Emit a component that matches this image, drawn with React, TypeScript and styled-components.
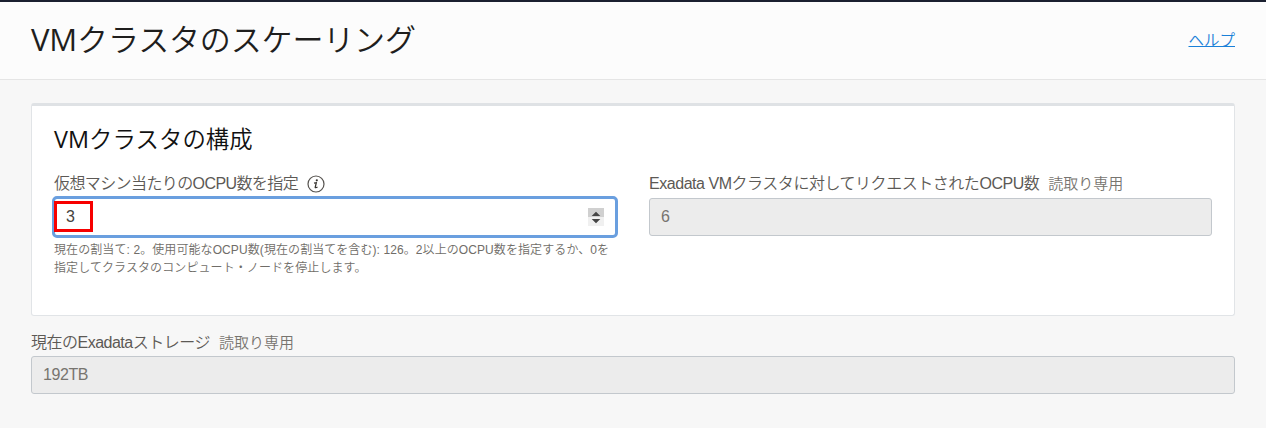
import React from "react";
import styled, { createGlobalStyle } from "styled-components";

const GlobalStyle = createGlobalStyle`
  * { box-sizing: border-box; }
  body {
    margin: 0;
    background: #f7f7f7;
    font-family: "Liberation Sans", "Noto Sans CJK JP", sans-serif;
    font-size: 16px;
    font-weight: 350;
    color: #5c5955;
  }
`;

const Page = styled.div`
  height: 428px;
  overflow: hidden;
  border-top: 2px solid #1b2030;
`;

const Header = styled.header`
  display: flex;
  justify-content: space-between;
  height: 78px;
  padding: 0 31px;
  background: #fcfcfc;
  border-bottom: 1px solid #e5e5e5;
`;

const Title = styled.h1`
  margin: 14px 0 0;
  font-family: "Open Sans", "Noto Sans CJK JP", sans-serif;
  font-size: 31px;
  font-weight: 350;
  line-height: 46px;
  letter-spacing: -0.15px;
  color: #1f1e1d;
  white-space: nowrap;
`;

const Latin = styled.span`
  font-weight: 400;
`;

const HelpLink = styled.a`
  margin-top: 28px;
  height: 22px;
  line-height: 22px;
  font-size: 15.5px;
  color: #1a80d8;
  text-decoration: underline;
  text-underline-offset: 0;
`;

const Content = styled.main`
  padding: 23px 31px 0;
`;

const Panel = styled.section`
  height: 213px;
  padding: 17px 22px 0;
  background: #fff;
  border: 1px solid #e1e4e7;
  border-top: 3px solid #dfe2e5;
  border-radius: 3px;
`;

const PanelTitle = styled.h2`
  margin: 0;
  font-family: "Open Sans", "Noto Sans CJK JP", sans-serif;
  font-size: 23.4px;
  font-weight: 350;
  line-height: 32px;
  letter-spacing: 0.05px;
  color: #111;
  white-space: nowrap;
`;

const Columns = styled.div`
  display: grid;
  grid-template-columns: 563px 563px;
  justify-content: space-between;
  margin-top: 18px;
`;

const Field = styled.div<{ $top?: number }>`
  margin-top: ${(p) => p.$top ?? 0}px;
`;

const Label = styled.div<{ $spacing?: number }>`
  display: flex;
  align-items: center;
  height: 22px;
  line-height: 22px;
  letter-spacing: ${(p) => p.$spacing ?? -0.5}px;
  white-space: nowrap;
`;

const ReadOnlyNote = styled.span`
  margin-left: 9px;
  font-size: 15px;
  letter-spacing: 0;
  color: #77746f;
`;

const InfoIcon = styled.svg`
  margin-left: 9px;
`;

const ValueBox = styled.div<{ $gap?: number }>`
  display: flex;
  align-items: center;
  height: 38px;
  margin-top: ${(p) => p.$gap ?? 3}px;
  padding: 0 11px;
  letter-spacing: -0.4px;
  color: #77746f;
  background: #ececec;
  border: 1px solid #c3c8cd;
  border-radius: 3px;
`;

const NumberBox = styled.div`
  position: relative;
  display: flex;
  align-items: center;
  justify-content: space-between;
  height: 42px;
  margin: 1px -2px 0;
  margin-right: -1px;
  padding: 0 11px;
  color: #45423e;
  background: #fff;
  border: 3px solid #6a9fdf;
  border-radius: 5px;
`;

const Marker = styled.span`
  position: absolute;
  left: -1px;
  top: 2px;
  width: 39px;
  height: 31px;
  border: 3px solid #f70000;
`;

const Hint = styled.p`
  margin: 3px 0 0;
  font-size: 12px;
  line-height: 18px;
  color: #706d68;
  white-space: nowrap;
`;

const HintLine = styled.span<{ $spacing: number }>`
  display: block;
  letter-spacing: ${(p) => p.$spacing}px;
`;

const Spinner = () => (
  <svg width="16" height="18" viewBox="0 0 16 18" aria-hidden="true">
    <rect width="16" height="9" fill="#d0d0d0" />
    <rect y="9" width="16" height="9" fill="#f0f0f0" />
    <path d="M8 3.8 12.3 8H3.7ZM3.7 11h8.6L8 15.2Z" fill="#454545" />
  </svg>
);

const Info = () => (
  <InfoIcon width="18" height="18" viewBox="0 0 18 18" aria-hidden="true">
    <circle cx="9" cy="9" r="8" fill="none" stroke="#55524e" strokeWidth="1.2" />
    <circle cx="9.8" cy="5.3" r="1.1" fill="#36332f" />
    <path d="M7 8.2 9.3 7.7 8.2 12.4Q8.3 13.2 10.5 12" fill="none" stroke="#36332f" strokeWidth="1.25" />
  </InfoIcon>
);

export default function App() {
  return (
    <Page>
      <GlobalStyle />
      <Header>
        <Title>
          <Latin>VM</Latin>クラスタのスケーリング
        </Title>
        <HelpLink>ヘルプ</HelpLink>
      </Header>
      <Content>
        <Panel>
          <PanelTitle>
            <Latin>VM</Latin>クラスタの構成
          </PanelTitle>
          <Columns>
            <Field>
              <Label $spacing={-0.6}>
                仮想マシン当たりのOCPU数を指定
                <Info />
              </Label>
              <NumberBox>
                3
                <Spinner />
                <Marker />
              </NumberBox>
              <Hint>
                <HintLine $spacing={0.09}>
                  現在の割当て: 2。使用可能なOCPU数(現在の割当てを含む): 126。2以上のOCPU数を指定するか、0を
                </HintLine>
                <HintLine $spacing={0.09}>指定してクラスタのコンピュート・ノードを停止します。</HintLine>
              </Hint>
            </Field>
            <Field>
              <Label $spacing={-0.46}>
                Exadata VMクラスタに対してリクエストされたOCPU数
                <ReadOnlyNote>読取り専用</ReadOnlyNote>
              </Label>
              <ValueBox>6</ValueBox>
            </Field>
          </Columns>
        </Panel>
        <Field $top={16}>
          <Label>
            現在のExadataストレージ
            <ReadOnlyNote>読取り専用</ReadOnlyNote>
          </Label>
          <ValueBox $gap={2}>192TB</ValueBox>
        </Field>
      </Content>
    </Page>
  );
}
